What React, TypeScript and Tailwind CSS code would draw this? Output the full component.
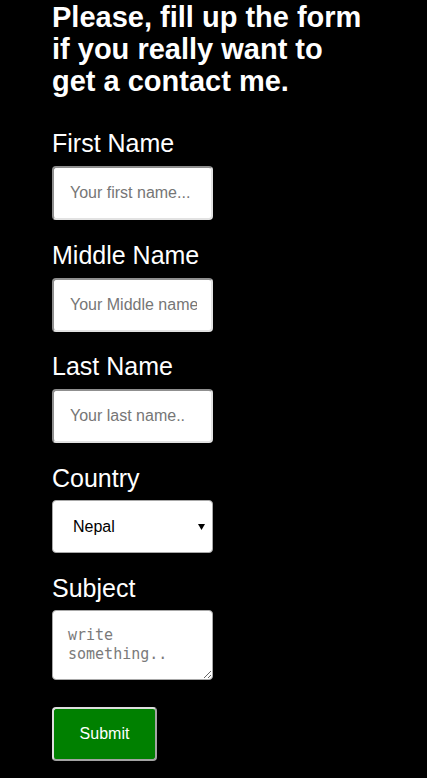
import React from "react";

const inputCls =
  "block w-[161px] h-[54px] bg-white rounded-[4px] border-2 [border-style:solid] border-t-[#8f8f8f] border-l-[#8f8f8f] border-r-[#e2e2e2] border-b-[#e2e2e2] pl-[16px] pr-[14px] text-[16px] text-black placeholder:text-[#767676] outline-none [font-family:'Liberation_Sans',Arial,sans-serif]";

const labelCls = "block text-[25px] leading-[28px] text-white";

export default function App() {
  return (
    <div className="min-h-[778px] w-full bg-black text-white [font-family:'Liberation_Sans',Arial,sans-serif]">
      <div className="pl-[52px]">
        <h1 className="text-[29px] leading-[32px] font-bold text-white w-[320px] pt-[1px]">
          Please, fill up the form if you really want to get a contact me.
        </h1>

        <form onSubmit={(e) => e.preventDefault()}>
          <label className={`${labelCls} mt-[32px]`}>First Name</label>
          <input className={`${inputCls} mt-[9px]`} placeholder="Your first name..." />

          <label className={`${labelCls} mt-[21px]`}>Middle Name</label>
          <input className={`${inputCls} mt-[9px]`} placeholder="Your Middle name..." />

          <label className={`${labelCls} mt-[20px]`}>Last Name</label>
          <input className={`${inputCls} mt-[9px]`} placeholder="Your last name.." />

          <label className={`${labelCls} mt-[21px]`}>Country</label>
          <div className="relative mt-[8px] w-[161px] h-[53px]">
            <select
              defaultValue="Nepal"
              className="appearance-none block w-full h-full bg-white rounded-[4px] border border-[#a8a8a8] pl-[20px] pr-[24px] text-[16px] text-black outline-none [font-family:'Liberation_Sans',Arial,sans-serif]"
            >
              <option>Nepal</option>
              <option>India</option>
              <option>China</option>
            </select>
            <svg
              className="pointer-events-none absolute left-[146px] top-[24px]"
              width="7"
              height="6"
              viewBox="0 0 7 6"
            >
              <polygon points="0,0 7,0 3.5,6" fill="#000" />
            </svg>
          </div>

          <label className={`${labelCls} mt-[21px]`}>Subject</label>
          <textarea
            className="block mt-[8px] w-[161px] h-[70px] bg-white rounded-[4px] border border-[#a8a8a8] pl-[15px] pr-[10px] pt-[15px] text-[15px] leading-[19px] text-black placeholder:text-[#7a7a7a] outline-none [font-family:'DejaVu_Sans_Mono',monospace]"
            placeholder="write something.."
          />

          <button
            type="submit"
            className="block mt-[27px] w-[105px] h-[54px] rounded-[4px] bg-[#008000] border-2 border-t-[#dedede] border-l-[#dedede] border-r-[#a4a4a4] border-b-[#a4a4a4] text-white text-[16px] [font-family:'Liberation_Sans',Arial,sans-serif]"
          >
            Submit
          </button>
        </form>
      </div>
    </div>
  );
}
